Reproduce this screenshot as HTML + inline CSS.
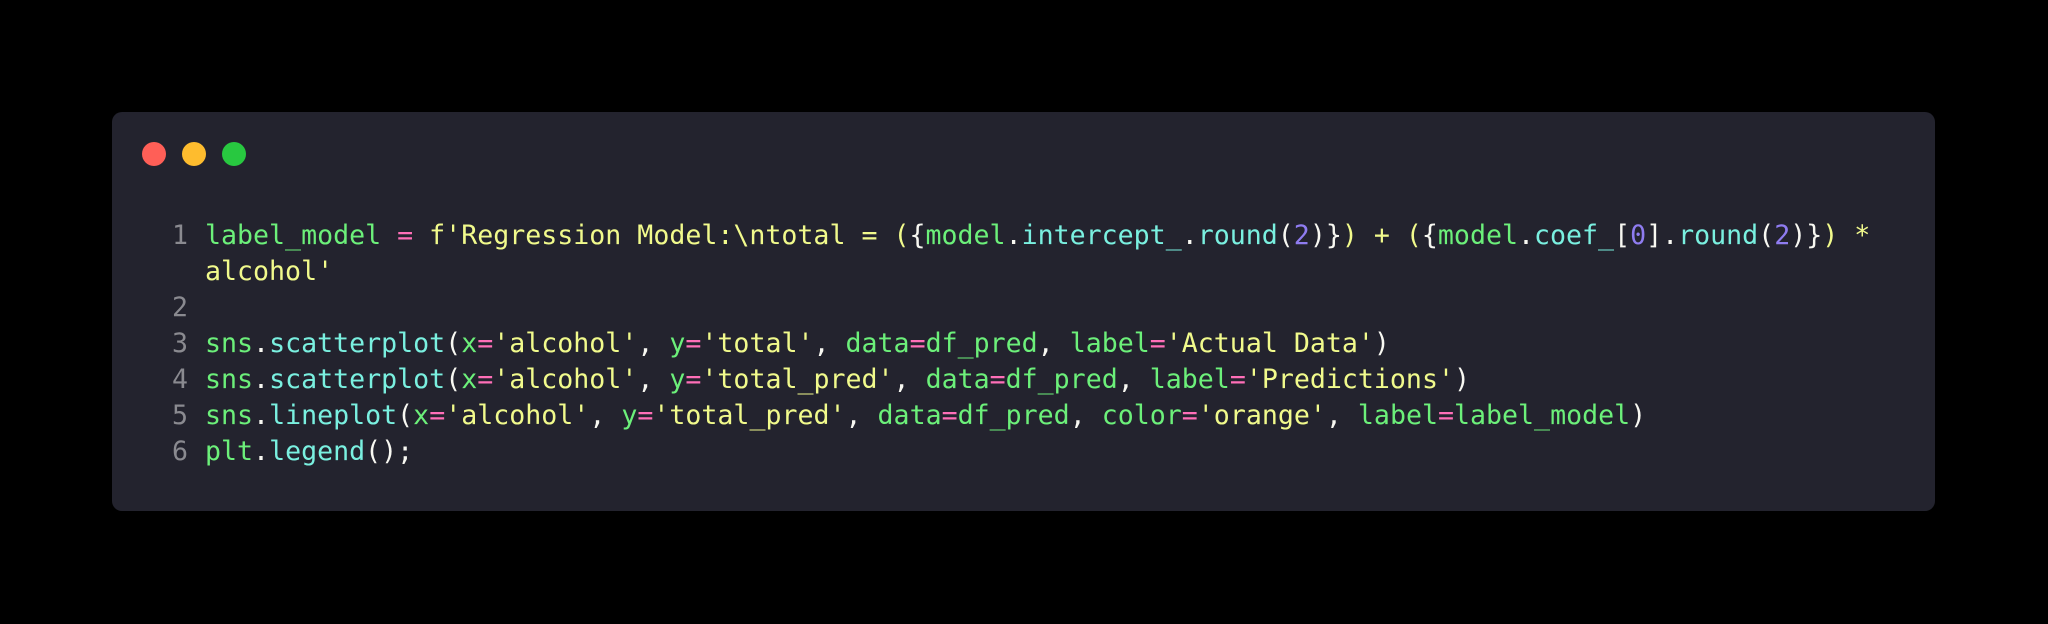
<!DOCTYPE html>
<html><head><meta charset="utf-8"><style>
html,body{margin:0;padding:0;background:#000;width:2048px;height:624px;overflow:hidden}
.win{position:absolute;left:112px;top:112px;width:1823px;height:399px;background:#23232e;border-radius:10px}
.dot{position:absolute;top:30px;width:24px;height:24px;border-radius:50%}
.code{position:absolute;left:0;top:106px;font-family:"DejaVu Sans Mono","Liberation Mono",monospace;font-size:26.6px;line-height:36px;color:#f8f8f2;white-space:pre}
.ln{position:absolute;left:56px;width:20px;text-align:right;color:#8a8a90}
.l{position:absolute;left:93px}
.g{color:#6cf07a}.c{color:#7af0e0}.y{color:#f1fa8c}.p{color:#ff6fb8}.v{color:#8f7cf0}
</style></head><body>
<div class="win">
<div class="dot" style="left:30px;background:#ff5f57"></div>
<div class="dot" style="left:70px;background:#febc2e"></div>
<div class="dot" style="left:110px;background:#28c840"></div>
<div class="code">
<div class="ln" style="top:0">1</div><div class="l" style="top:0"><span class="g">label_model</span> <span class="p">=</span> <span class="y">f'Regression Model:\ntotal = (</span>{<span class="g">model</span>.<span class="c">intercept_</span>.<span class="c">round</span>(<span class="v">2</span>)}<span class="y">) + (</span>{<span class="g">model</span>.<span class="c">coef_</span>[<span class="v">0</span>].<span class="c">round</span>(<span class="v">2</span>)}<span class="y">) *</span></div>
<div class="l" style="top:36px"><span class="y">alcohol'</span></div>
<div class="ln" style="top:72px">2</div>
<div class="ln" style="top:108px">3</div><div class="l" style="top:108px"><span class="g">sns</span>.<span class="c">scatterplot</span>(<span class="g">x</span><span class="p">=</span><span class="y">'alcohol'</span>, <span class="g">y</span><span class="p">=</span><span class="y">'total'</span>, <span class="g">data</span><span class="p">=</span><span class="g">df_pred</span>, <span class="g">label</span><span class="p">=</span><span class="y">'Actual Data'</span>)</div>
<div class="ln" style="top:144px">4</div><div class="l" style="top:144px"><span class="g">sns</span>.<span class="c">scatterplot</span>(<span class="g">x</span><span class="p">=</span><span class="y">'alcohol'</span>, <span class="g">y</span><span class="p">=</span><span class="y">'total_pred'</span>, <span class="g">data</span><span class="p">=</span><span class="g">df_pred</span>, <span class="g">label</span><span class="p">=</span><span class="y">'Predictions'</span>)</div>
<div class="ln" style="top:180px">5</div><div class="l" style="top:180px"><span class="g">sns</span>.<span class="c">lineplot</span>(<span class="g">x</span><span class="p">=</span><span class="y">'alcohol'</span>, <span class="g">y</span><span class="p">=</span><span class="y">'total_pred'</span>, <span class="g">data</span><span class="p">=</span><span class="g">df_pred</span>, <span class="g">color</span><span class="p">=</span><span class="y">'orange'</span>, <span class="g">label</span><span class="p">=</span><span class="g">label_model</span>)</div>
<div class="ln" style="top:216px">6</div><div class="l" style="top:216px"><span class="g">plt</span>.<span class="c">legend</span>();</div>
</div>
</div>
</body></html>
